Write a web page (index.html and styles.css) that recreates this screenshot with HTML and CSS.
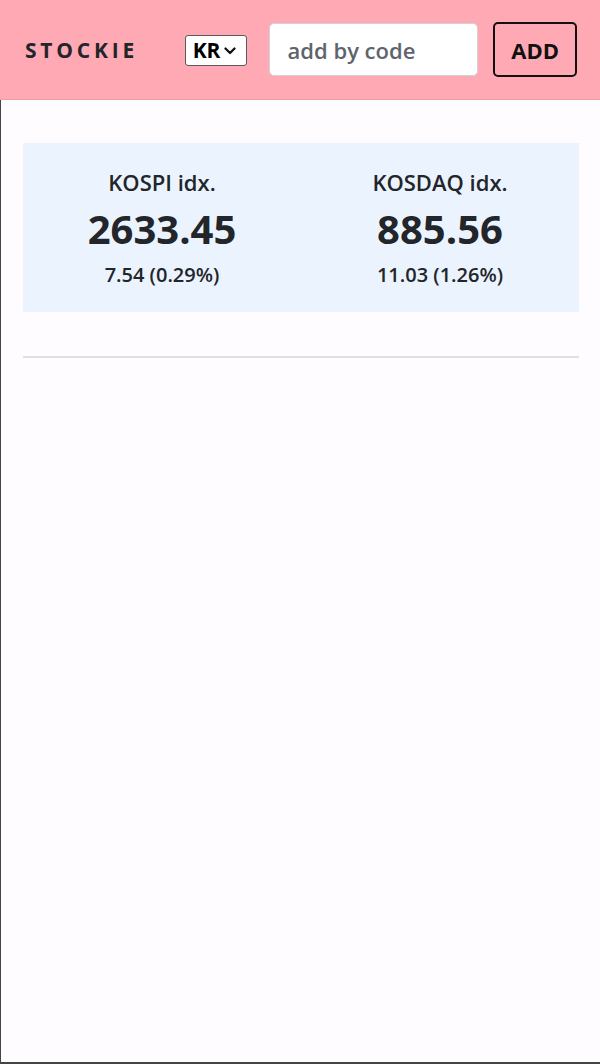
FILE: index.html
```html
<!DOCTYPE html>
<html>
<head>
<meta charset="utf-8">
<link rel="stylesheet" href="styles.css">
</head>
<body>
<div class="app">
  <header class="topbar">
    <div class="brand">STOCKIE</div>
    <div class="select">KR<svg class="chev" viewBox="0 0 12 8" width="12" height="8"><path d="M1.5 1.5 L6 6 L10.5 1.5" fill="none" stroke="#111" stroke-width="2.3" stroke-linecap="round" stroke-linejoin="round"/></svg></div>
    <div class="input">add by code</div>
    <div class="btn">ADD</div>
  </header>
  <main class="content">
    <section class="indices">
      <div class="idx">
        <div class="idx-name">KOSPI idx.</div>
        <div class="idx-value">2633.45</div>
        <div class="idx-change">7.54 (0.29%)</div>
      </div>
      <div class="idx">
        <div class="idx-name">KOSDAQ idx.</div>
        <div class="idx-value">885.56</div>
        <div class="idx-change">11.03 (1.26%)</div>
      </div>
    </section>
    <hr class="divider">
  </main>
</div>
</body>
</html>
```
FILE: styles.css
```css
* { box-sizing: border-box; }
html, body { margin: 0; padding: 0; }
body {
  font-family: "Open Sans", "Noto Sans", sans-serif;
  color: #222529;
  background: #fefcfe;
}
.app {
  height: 1064px;
  display: flex;
  flex-direction: column;
}
.topbar {
  height: 100px;
  background: #ffa9b4;
  border-bottom: 1px solid #f29ca7;
  display: flex;
  align-items: center;
  padding: 0 23px 0 25px;
  flex-shrink: 0;
}
.brand {
  font-weight: 700;
  font-size: 21px;
  letter-spacing: 3.8px;
  color: #22252a;
  width: 160px;
}
.select {
  width: 62px;
  height: 31px;
  border: 1px solid #5a5a5a;
  border-radius: 3px;
  background: #fff;
  display: flex;
  align-items: center;
  padding-left: 7px;
  font-size: 21px;
  font-weight: 700;
  color: #000;
  gap: 4px;
  margin-top: 1px;
}
.chev { margin-top: 2px; }
.input {
  margin-left: 22px;
  width: 210px;
  height: 53px;
  background: #fff;
  border: 1px solid #d3d3d6;
  border-radius: 5px;
  display: flex;
  align-items: center;
  padding-left: 18px;
  font-size: 22px;
  font-weight: 600;
  color: #5e646c;
}
.btn {
  margin-left: 15px;
  width: 84px;
  height: 55px;
  border: 2px solid #111;
  border-radius: 5px;
  display: flex;
  align-items: center;
  justify-content: center;
  font-size: 22px;
  font-weight: 700;
  color: #111;
}
.content {
  flex: 1;
  border-left: 1px solid #444;
  border-bottom: 2px solid #444;
  padding: 43px 21px 0 22px;
}
.indices {
  background: #ebf4fe;
  height: 169px;
  display: grid;
  grid-template-columns: 1fr 1fr;
  padding: 25px 0 0;
}
.idx {
  display: flex;
  flex-direction: column;
  align-items: center;
}
.idx-name {
  font-size: 22px;
  font-weight: 600;
  line-height: 28px;
}
.idx-value {
  font-size: 40px;
  font-weight: 700;
  line-height: 52px;
  margin-top: 7px;
}
.idx-change {
  font-size: 20px;
  font-weight: 600;
  line-height: 24px;
  margin-top: 8px;
}
.divider {
  margin: 44px 0 0;
  border: 0;
  border-top: 2px solid #e0dfe2;
}
```
